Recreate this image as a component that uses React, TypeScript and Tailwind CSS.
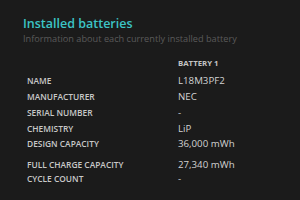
const rows: { label: string; value: string; h: string }[] = [
  { label: 'NAME', value: 'L18M3PF2', h: 'h-[16px]' },
  { label: 'MANUFACTURER', value: 'NEC', h: 'h-[16px]' },
  { label: 'SERIAL NUMBER', value: '-', h: 'h-[16px]' },
  { label: 'CHEMISTRY', value: 'LiP', h: 'h-[15px]' },
  { label: 'DESIGN CAPACITY', value: '36,000 mWh', h: 'h-[21px]' },
  { label: 'FULL CHARGE CAPACITY', value: '27,340 mWh', h: 'h-[14px]' },
  { label: 'CYCLE COUNT', value: '-', h: 'h-[16px]' },
]

export default function App() {
  return (
    <div className="w-[300px] h-[200px] overflow-hidden bg-[#1b1b1b] font-['Open_Sans',sans-serif]">
      <div className="pl-[23px] pt-[16px]">
        <h1 className="text-[12.5px] leading-[16px] font-semibold text-[#3cc4c6]">Installed batteries</h1>
        <p className="text-[9.2px] leading-[13px] text-[#5a5a5a]">
          Information about each currently installed battery
        </p>
      </div>
      <div className="pl-[27px] pt-[14px]">
        <div className="flex h-[16px] items-start">
          <div className="w-[151px]" />
          <div className="text-[7.8px] leading-[9px] font-bold text-[#c4c4c4]">BATTERY 1</div>
        </div>
        {rows.map((r) => (
          <div key={r.label} className={`flex items-start ${r.h}`}>
            <div className="w-[151px] text-[8.4px] leading-[11px] font-semibold text-[#c8c8c8]">{r.label}</div>
            <div className="text-[9.7px] leading-[11px] text-[#d2d2d2]">{r.value}</div>
          </div>
        ))}
      </div>
    </div>
  )
}
